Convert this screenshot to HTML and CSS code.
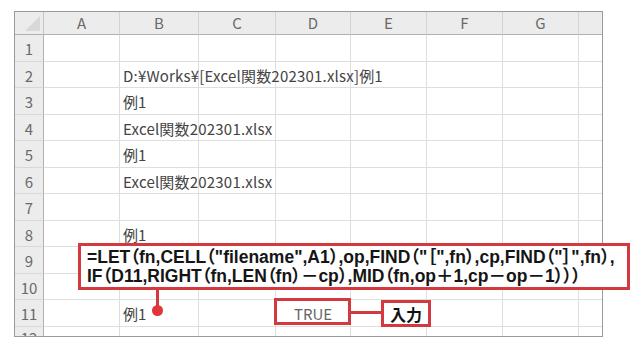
FILE: index.html
```html
<!DOCTYPE html>
<html lang="ja">

<head>
    <meta charset="UTF-8">
    <title>LET関数</title>
    <link rel="stylesheet" href="styles.css">
</head>

<body>
    <div class="page">
        <div class="sheet">
            <div class="corner"></div>
            <div class="colhead">A</div>
            <div class="colhead">B</div>
            <div class="colhead">C</div>
            <div class="colhead">D</div>
            <div class="colhead">E</div>
            <div class="colhead">F</div>
            <div class="colhead">G</div>
            <div class="colhead"></div>

            <div class="rowhead">1</div>
            <div class="cell"></div><div class="cell"></div><div class="cell"></div><div class="cell"></div>
            <div class="cell"></div><div class="cell"></div><div class="cell"></div><div class="cell"></div>

            <div class="rowhead">2</div>
            <div class="cell"></div><div class="cell over">D:¥Works¥[Excel関数202301.xlsx]例1</div><div class="cell"></div><div class="cell"></div>
            <div class="cell"></div><div class="cell"></div><div class="cell"></div><div class="cell"></div>

            <div class="rowhead">3</div>
            <div class="cell"></div><div class="cell">例1</div><div class="cell"></div><div class="cell"></div>
            <div class="cell"></div><div class="cell"></div><div class="cell"></div><div class="cell"></div>

            <div class="rowhead">4</div>
            <div class="cell"></div><div class="cell over">Excel関数202301.xlsx</div><div class="cell"></div><div class="cell"></div>
            <div class="cell"></div><div class="cell"></div><div class="cell"></div><div class="cell"></div>

            <div class="rowhead">5</div>
            <div class="cell"></div><div class="cell">例1</div><div class="cell"></div><div class="cell"></div>
            <div class="cell"></div><div class="cell"></div><div class="cell"></div><div class="cell"></div>

            <div class="rowhead">6</div>
            <div class="cell"></div><div class="cell over">Excel関数202301.xlsx</div><div class="cell"></div><div class="cell"></div>
            <div class="cell"></div><div class="cell"></div><div class="cell"></div><div class="cell"></div>

            <div class="rowhead">7</div>
            <div class="cell"></div><div class="cell"></div><div class="cell"></div><div class="cell"></div>
            <div class="cell"></div><div class="cell"></div><div class="cell"></div><div class="cell"></div>

            <div class="rowhead">8</div>
            <div class="cell"></div><div class="cell">例1</div><div class="cell"></div><div class="cell"></div>
            <div class="cell"></div><div class="cell"></div><div class="cell"></div><div class="cell"></div>

            <div class="rowhead">9</div>
            <div class="cell"></div><div class="cell"></div><div class="cell"></div><div class="cell"></div>
            <div class="cell"></div><div class="cell"></div><div class="cell"></div><div class="cell"></div>

            <div class="rowhead">10</div>
            <div class="cell"></div><div class="cell"></div><div class="cell"></div><div class="cell"></div>
            <div class="cell"></div><div class="cell"></div><div class="cell"></div><div class="cell"></div>

            <div class="rowhead">11</div>
            <div class="cell"></div><div class="cell">例1</div><div class="cell"></div><div class="cell center">TRUE</div>
            <div class="cell"></div><div class="cell"></div><div class="cell"></div><div class="cell"></div>

            <div class="rowhead">12</div>
            <div class="cell"></div><div class="cell"></div><div class="cell"></div><div class="cell"></div>
            <div class="cell"></div><div class="cell"></div><div class="cell"></div><div class="cell"></div>
        </div>

        <!-- 注釈 -->
        <div class="formula">
            <div>=LET（fn,CELL（"filename",A1）,op,FIND（"［",fn）,cp,FIND（"］",fn）,</div>
            <div>IF（D11,RIGHT（fn,LEN（fn）－cp）,MID（fn,op＋1,cp－op－1）））</div>
        </div>
        <div class="stem"></div>
        <div class="dot"></div>
        <div class="truebox"></div>
        <div class="link"></div>
        <div class="label">入力</div>
    </div>
</body>

</html>
```

FILE: styles.css
```css
* {
    margin: 0;
    padding: 0;
    box-sizing: border-box;
}

body {
    background: #fff;
    font-family: "Noto Sans CJK JP", sans-serif;
}

.page {
    width: 638px;
    height: 352px;
    position: relative;
    padding: 11px 0 0 14px;
}

.sheet {
    width: 589px;
    height: 326px;
    display: grid;
    grid-template-columns: 29px 76px 79px 77px 75px 76px 76px 76px 25px;
    grid-template-rows: 23px repeat(11, 26.5px) 20px;
    border: 1px solid #9a9a9a;
    overflow: hidden;
}

.corner,
.colhead,
.rowhead {
    background: #ececec;
    color: #6a6a6a;
    font-size: 15px;
    display: flex;
    align-items: center;
    justify-content: center;
}

.corner {
    border-right: 1px solid #c4c4c4;
    border-bottom: 1px solid #b0b0b0;
    position: relative;
}

.corner::after {
    content: "";
    position: absolute;
    right: 3px;
    bottom: 3px;
    border-left: 15px solid transparent;
    border-bottom: 15px solid #d8d8d8;
}

.colhead {
    border-right: 1px solid #d4d4d4;
    border-bottom: 1px solid #b0b0b0;
    padding-bottom: 2px;
}

.rowhead {
    border-right: 1px solid #b0b0b0;
    border-bottom: 1px solid #d8d8d8;
    padding-top: 2px;
}

.cell {
    border-right: 1px solid #dedede;
    border-bottom: 1px solid #dedede;
    color: #444;
    font-size: 15px;
    padding: 2px 0 0 3px;
    display: flex;
    align-items: center;
    white-space: nowrap;
}

.cell.over {
    overflow: visible;
    z-index: 1;
    letter-spacing: 0.2px;
}

.cell.center {
    justify-content: center;
    color: #666;
    font-size: 15px;
    padding-left: 0;
}

/* 注釈 */
.formula {
    position: absolute;
    left: 78px;
    top: 243px;
    width: 552px;
    height: 47px;
    background: #fff;
    border: 3px solid #d23a40;
    padding: 2px 0 0 6px;
    font-family: "Liberation Sans", "Noto Sans CJK JP", sans-serif;
    font-feature-settings: "palt";
    font-size: 17.5px;
    font-weight: 700;
    line-height: 19px;
    color: #151515;
    white-space: nowrap;
}

.stem {
    position: absolute;
    left: 156px;
    top: 290px;
    width: 3px;
    height: 20px;
    background: #d23a40;
}

.dot {
    position: absolute;
    left: 152px;
    top: 305px;
    width: 11px;
    height: 11px;
    border-radius: 50%;
    background: #e0353b;
}

.truebox {
    position: absolute;
    left: 274px;
    top: 298px;
    width: 77px;
    height: 27px;
    border: 3px solid #d23a40;
}

.link {
    position: absolute;
    left: 350px;
    top: 311px;
    width: 32px;
    height: 3px;
    background: #d23a40;
}

.label {
    position: absolute;
    left: 381px;
    top: 300px;
    width: 50px;
    height: 27px;
    background: #fff;
    border: 3px solid #d23a40;
    font-size: 16px;
    font-weight: 700;
    color: #111;
    display: flex;
    align-items: center;
    justify-content: center;
    line-height: 1;
}
```
